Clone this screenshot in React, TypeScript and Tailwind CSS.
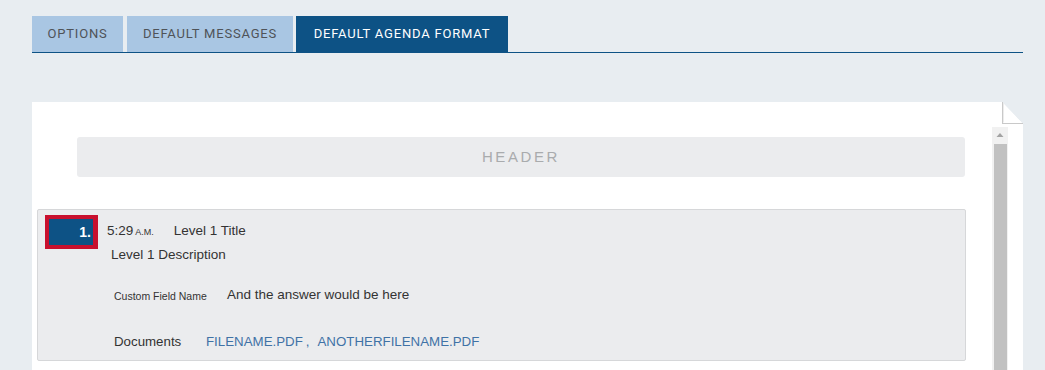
import React from "react";

function FoldCorner() {
  return (
    <svg
      className="absolute right-0 top-0"
      width="21"
      height="22"
      viewBox="0 0 21 22"
    >
      <polygon points="0,0 21,0 21,22" fill="#e8edf1" />
      <polygon points="0,0 21,22 0,22" fill="#ffffff" />
      <line x1="0.5" y1="0" x2="0.5" y2="21.5" stroke="#c9c9c9" strokeWidth="1" />
      <line x1="0" y1="21.5" x2="21" y2="21.5" stroke="#c9c9c9" strokeWidth="1" />
      <line x1="1.5" y1="1" x2="1.5" y2="20.5" stroke="#ececec" strokeWidth="1" />
    </svg>
  );
}

export default function App() {
  const tabFont = { fontFamily: "Roboto, 'Open Sans', sans-serif" };
  return (
    <div className="h-[370px] w-[1045px] overflow-hidden bg-[#e8edf1]">
      <div className="ml-[32px] w-[991px] pt-[16px]">
        {/* Tabs */}
        <div
          className="flex h-[37px] gap-[4px] border-b border-[#0d5285] text-[13px] tracking-[0.8px]"
          style={tabFont}
        >
          <div className="flex h-[36px] w-[91px] items-center justify-center bg-[#a9c6e3] text-[#4f5358]">
            OPTIONS
          </div>
          <div className="flex h-[36px] w-[166px] items-center justify-center bg-[#a9c6e3] text-[#4f5358]">
            DEFAULT MESSAGES
          </div>
          <div className="-ml-[1px] flex h-[36px] w-[212px] items-center justify-center bg-[#0d5285] text-white">
            DEFAULT AGENDA FORMAT
          </div>
        </div>

        {/* Panel */}
        <div
          className="relative mt-[49px] flex h-[300px] bg-white"
          style={{ fontFamily: "'Liberation Sans', Arial, sans-serif" }}
        >
          <FoldCorner />
          <div className="ml-[5px] w-[929px] pt-[35px]">
            <div className="ml-[40px] mr-[1px] flex h-[40px] items-center justify-center rounded-[3px] bg-[#ebecee] text-[15px] tracking-[2.6px] text-[#a9abad]">
              HEADER
            </div>

            <div className="mt-[32px] rounded-[2px] border border-[#d6d7d9] bg-[#ebecee] pb-[8px] pl-[7px] pt-[5px] text-[#333333]">
              <div className="flex items-start">
                <div className="flex h-[34px] w-[53px] items-center justify-end border-4 border-r-[5px] border-[#c8102e] bg-[#0d5285] pr-[2px] text-[14px] font-bold text-white">
                  1.
                </div>
                <div className="ml-[9px] pt-[6px]">
                  <div className="flex items-baseline leading-[20px]">
                    <span className="text-[13.5px]">5:29</span>
                    <span className="ml-[2px] text-[9px]">A.M.</span>
                    <span className="ml-[20px] text-[13.5px]">Level 1 Title</span>
                  </div>
                  <div className="mt-[4px] pl-[4px] text-[13.5px] leading-[18px]">
                    Level 1 Description
                  </div>
                </div>
              </div>

              <div className="ml-[69px] mt-[19px] flex items-center leading-[20px]">
                <span className="w-[113px] pt-[3px] text-[10.5px]">Custom Field Name</span>
                <span className="text-[13.5px]">And the answer would be here</span>
              </div>

              <div className="ml-[69px] mt-[26px] flex items-center text-[13.3px] leading-[20px]">
                <span className="w-[92px]">Documents</span>
                <span className="text-[#3f72a6]">FILENAME.PDF</span>
                <span className="ml-[3px] mr-[8px] text-[#3f72a6]">,</span>
                <span className="text-[#3f72a6]">ANOTHERFILENAME.PDF</span>
              </div>
            </div>
          </div>

          {/* Scrollbar */}
          <div className="ml-[26px] mt-[25px] flex w-[16px] flex-col items-center bg-[#f1f1f1]">
            <svg width="8" height="17" viewBox="0 0 8 17" className="mt-0">
              <polygon points="4,6 7.5,10 0.5,10" fill="#a3a3a3" />
            </svg>
            <div className="w-[13px] flex-1 bg-[#c1c1c1]" />
          </div>
        </div>
      </div>
    </div>
  );
}
